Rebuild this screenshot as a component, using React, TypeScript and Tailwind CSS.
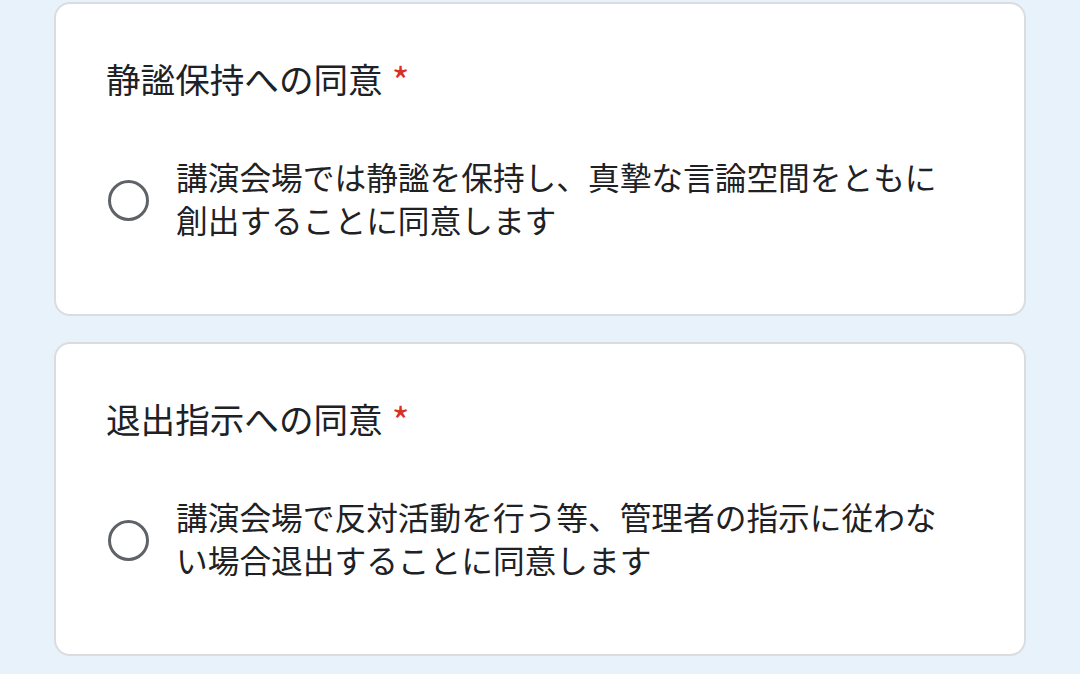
const questions = [
  {
    title: "静謐保持への同意",
    option:
      "講演会場では静謐を保持し、真摯な言論空間をともに創出することに同意します",
  },
  {
    title: "退出指示への同意",
    option:
      "講演会場で反対活動を行う等、管理者の指示に従わない場合退出することに同意します",
  },
];

const font = {
  fontFamily: '"Noto Sans CJK JP", Roboto, "Noto Sans", sans-serif',
};

const App = () => {
  return (
    <div
      className="min-h-[674px] w-[1080px] bg-[#e8f2fa] px-[54px] pt-[2px] pb-[20px]"
      style={font}
    >
      <div className="flex flex-col gap-[26px]">
        {questions.map((q) => (
          <div
            key={q.title}
            className="h-[314px] rounded-[16px] border-2 border-[#dadce0] bg-white px-[50px] pt-[52px]"
          >
            <div className="flex items-start text-[34.6px] leading-[44px] text-[#202124]">
              <span>{q.title}</span>
              <span className="ml-[9px] mt-[2px] text-[38px] text-[#d93025]">*</span>
            </div>
            <div className="mt-[53px] flex items-center">
              <div className="ml-[2px] mt-[5px] h-[41px] w-[41px] shrink-0 rounded-full border-[3.5px] border-[#5f6368]" />
              <p className="ml-[27px] w-[780px] text-[31.7px] leading-[42.5px] text-[#202124]">
                {q.option}
              </p>
            </div>
          </div>
        ))}
      </div>
    </div>
  );
};

export default App;
